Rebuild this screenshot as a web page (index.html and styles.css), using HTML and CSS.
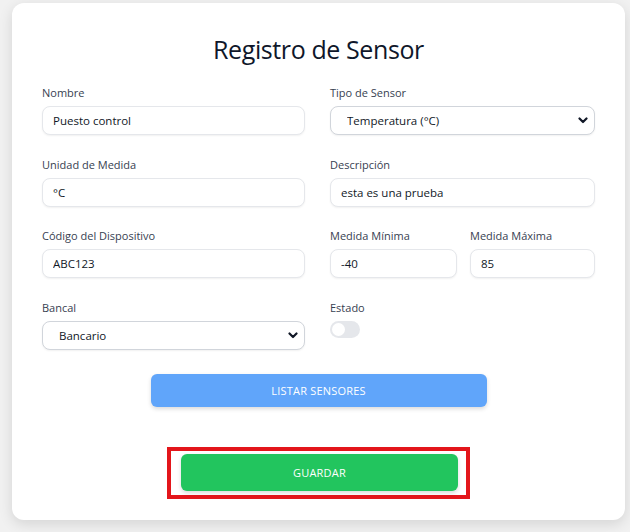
FILE: index.html
```html
<!DOCTYPE html>
<html lang="es">
<head>
<meta charset="utf-8">
<title>Registro de Sensor</title>
<link rel="stylesheet" href="styles.css">
</head>
<body>
<div class="card">
  <h1 class="title">Registro de Sensor</h1>
  <form class="form">
    <div class="field">
      <label class="label">Nombre</label>
      <input class="input" type="text" value="Puesto control">
    </div>
    <div class="field">
      <label class="label">Tipo de Sensor</label>
      <div class="select-wrap">
        <select class="select"><option>Temperatura (°C)</option></select>
        <svg class="chev" width="10" height="7" viewBox="0 0 10 7"><path d="M1.5 1.5 L5 5 L8.5 1.5" fill="none" stroke="#111827" stroke-width="2.2" stroke-linecap="round" stroke-linejoin="round"/></svg>
      </div>
    </div>
    <div class="field">
      <label class="label">Unidad de Medida</label>
      <input class="input" type="text" value="°C">
    </div>
    <div class="field">
      <label class="label">Descripción</label>
      <input class="input" type="text" value="esta es una prueba">
    </div>
    <div class="field">
      <label class="label">Código del Dispositivo</label>
      <input class="input" type="text" value="ABC123">
    </div>
    <div class="pair">
      <div class="field">
        <label class="label">Medida Mínima</label>
        <input class="input" type="text" value="-40">
      </div>
      <div class="field">
        <label class="label">Medida Máxima</label>
        <input class="input" type="text" value="85">
      </div>
    </div>
    <div class="field">
      <label class="label">Bancal</label>
      <div class="select-wrap">
        <select class="select"><option>Bancario</option></select>
        <svg class="chev" width="10" height="7" viewBox="0 0 10 7"><path d="M1.5 1.5 L5 5 L8.5 1.5" fill="none" stroke="#111827" stroke-width="2.2" stroke-linecap="round" stroke-linejoin="round"/></svg>
      </div>
    </div>
    <div class="field">
      <label class="label">Estado</label>
      <span class="toggle"><span class="knob"></span></span>
    </div>
  </form>
  <div class="actions">
    <button class="btn btn-blue" type="button">LISTAR SENSORES</button>
    <div class="highlight">
      <button class="btn btn-green" type="button">GUARDAR</button>
    </div>
  </div>
</div>
</body>
</html>
```

FILE: styles.css
```css
* { box-sizing: border-box; }
html, body { margin: 0; }
body {
  background: #f1f1f1;
  padding: 3px 5px 12px 12px;
  font-family: "Open Sans", "Noto Sans", sans-serif;
  color: #1f2937;
}
.card {
  background: #ffffff;
  border-radius: 12px;
  box-shadow: 0 4px 14px rgba(0,0,0,0.12);
  padding: 30px 30px 21px 30px;
  height: 517px;
}
.title {
  margin: 0 0 20px 0;
  text-align: center;
  font-size: 25px;
  line-height: 32px;
  font-weight: 500;
  color: #0f172a;
  letter-spacing: -0.4px;
}
.form {
  display: grid;
  grid-template-columns: 263px 265px;
  column-gap: 25px;
  row-gap: 21.67px;
}
.pair {
  display: grid;
  grid-template-columns: 127px 125px;
  column-gap: 13px;
}
.field {
  display: flex;
  flex-direction: column;
}
.label {
  font-size: 11px;
  line-height: 15px;
  margin-bottom: 6px;
  color: #374151;
}
.input, .select {
  height: 29px;
  width: 100%;
  border: 1px solid #e5e7eb;
  border-radius: 8px;
  background: #fff;
  box-shadow: 0 1px 2px rgba(0,0,0,0.06);
  font-family: inherit;
  font-size: 11.5px;
  color: #111827;
  padding: 0 10px;
  outline: none;
}
.select-wrap { position: relative; }
.select {
  appearance: none;
  -webkit-appearance: none;
  padding: 0 16px;
  border-color: #d1d5db;
}
.chev {
  position: absolute;
  right: 7px;
  top: 11px;
  pointer-events: none;
}
.toggle {
  display: inline-block;
  width: 30px;
  height: 17px;
  border-radius: 9px;
  background: #e5e7eb;
  position: relative;
}
.knob {
  position: absolute;
  left: 2px;
  top: 2px;
  width: 13px;
  height: 13px;
  border-radius: 50%;
  background: #fff;
}
.actions {
  display: flex;
  flex-direction: column;
  align-items: center;
  margin-top: 24px;
}
.btn {
  border: none;
  border-radius: 6px;
  color: #fff;
  font-family: inherit;
  font-size: 11px;
  letter-spacing: 0.2px;
  box-shadow: 0 2px 4px rgba(0,0,0,0.15);
}
.btn-blue {
  width: 336px;
  height: 33px;
  background: #60a5fa;
}
.highlight {
  margin-top: 40px;
  width: 303px;
  border: 4px solid #e3161b;
  padding: 3px 10px 4px 10px;
}
.btn-green {
  display: block;
  width: 277px;
  height: 37px;
  background: #22c55e;
}
```
